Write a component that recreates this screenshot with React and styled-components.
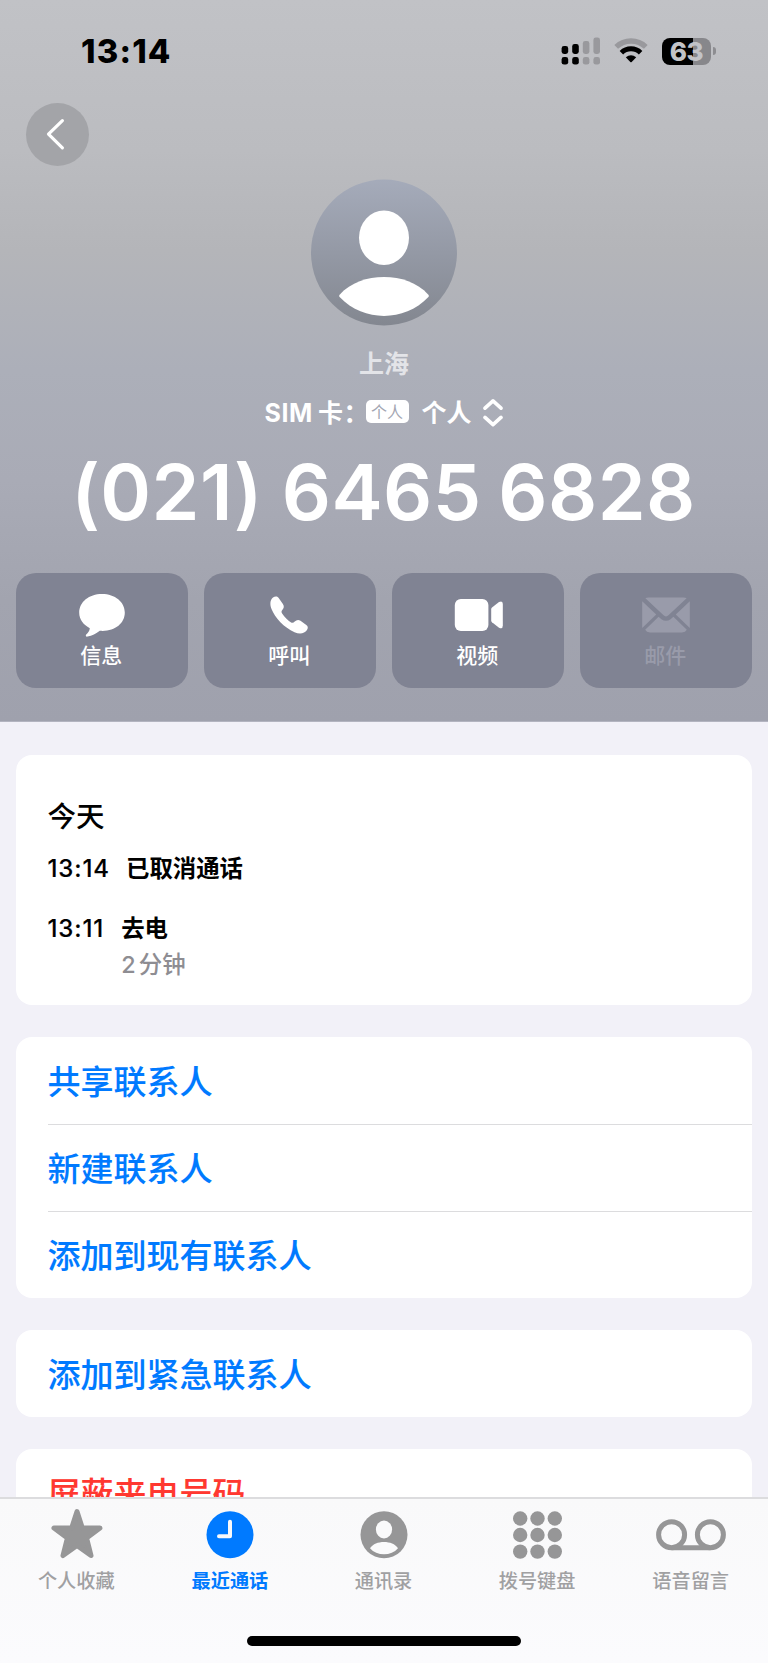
import React from "react";
import styled, { createGlobalStyle } from "styled-components";

const GlobalStyle = createGlobalStyle`
  * { box-sizing: border-box; }
  body {
    margin: 0;
    background: #f2f1f8;
    font-family: Inter, "Noto Sans CJK SC", sans-serif;
  }
`;

const Screen = styled.div`
  width: 768px;
  height: 1663px;
  overflow: hidden;
  display: flex;
  flex-direction: column;
  background: #f2f1f8;
`;

const Header = styled.header`
  flex: none;
  height: 722px;
  display: flex;
  flex-direction: column;
  align-items: center;
  background: linear-gradient(#c1c2c6 0px, #bbbcc0 150px, #b4b5b9 250px, #acafb9 370px, #a9abb6 480px, #a2a4af 600px, #9fa1ad 722px);
  border-bottom: 1px solid #b3b4c0;
`;

const StatusBar = styled.div`
  width: 100%;
  height: 103px;
  padding: 30px 52px 0 81px;
  display: flex;
  justify-content: space-between;
`;

const Clock = styled.time`
  font-size: 32.8px;
  line-height: 42px;
  font-weight: 800;
  letter-spacing: 1.2px;
  color: #000;
`;

const StatusIcons = styled.div`
  height: 42px;
  display: flex;
  align-items: center;
`;

const SignalSvg = styled.svg`
  margin-right: 13px;
`;

const WifiSvg = styled.svg`
  margin-right: 14px;
`;

const Battery = styled.div`
  width: 49px;
  height: 27px;
  border-radius: 8px;
  background: linear-gradient(90deg, #000 0 31px, #87878b 31px);
  color: #c2c3c7;
  font-size: 26px;
  font-weight: 800;
  line-height: 27px;
  letter-spacing: -0.3px;
  text-align: center;
`;

const BatteryCap = styled.div`
  width: 3px;
  height: 8px;
  margin-left: 2px;
  border-radius: 0 3px 3px 0;
  background: #8d8d91;
`;

const NavBar = styled.nav`
  width: 100%;
  height: 76px;
  padding-left: 26px;
`;

const BackButton = styled.button`
  width: 63px;
  height: 63px;
  padding: 0;
  border: 0;
  border-radius: 50%;
  background: #a3a4a8;
  display: block;
`;

const AvatarSvg = styled.svg`
  flex: none;
`;

const Place = styled.div`
  height: 30px;
  margin-top: 23px;
  line-height: 30px;
  font-size: 25px;
  font-weight: 700;
  color: #e3e4e8;
`;

const SimRow = styled.div`
  height: 36px;
  margin-top: 15px;
  padding: 1px 1px 0 0;
  display: flex;
  align-items: center;
  color: #fff;
  font-size: 25px;
  font-weight: 700;
  line-height: 36px;
`;

const SimLabel = styled.span`
  width: 101px;
  white-space: nowrap;
  letter-spacing: 0.6px;
  word-spacing: -1.5px;
`;

const SimTag = styled.span`
  width: 43px;
  height: 23px;
  margin: -3px 13px 0 0;
  border-radius: 5px;
  background: #fff;
  color: #a3a6b2;
  font-size: 16px;
  font-weight: 400;
  line-height: 24px;
  text-align: center;
`;

const SimName = styled.span`
  width: 61px;
`;

const PhoneNumber = styled.h1`
  margin: 12px 0 0;
  height: 100px;
  display: flex;
  font-size: 77px;
  line-height: 100px;
  font-weight: 600;
  letter-spacing: 0.4px;
  white-space: pre;
  color: #fff;
`;

const NumberPart = styled.span`
  margin-left: ${(p) => p.$pull}px;
`;

const Actions = styled.div`
  width: 100%;
  margin-top: auto;
  padding: 0 16px 33px;
  display: grid;
  grid-template-columns: repeat(4, 1fr);
  gap: 16px;
`;

const ActionButton = styled.button`
  height: 115px;
  padding: 17px 0 0;
  border: 0;
  border-radius: 20px;
  background: #808393;
  color: ${(p) => (p.disabled ? "#999baa" : "#fff")};
  display: flex;
  flex-direction: column;
  align-items: center;
  font-family: inherit;
  font-size: 21px;
  font-weight: 500;
  line-height: 28px;
  span { margin-top: 4px; padding-right: 1.5px; }
`;

const Content = styled.main`
  flex: 1;
  min-height: 0;
  overflow: hidden;
  padding: 33px 16px 0;
  display: flex;
  flex-direction: column;
  gap: 32px;
`;

const Card = styled.section`
  flex: none;
  background: #fff;
  border-radius: 16px;
  overflow: hidden;
`;

const HistoryCard = styled(Card)`
  height: 250px;
  padding: 42px 31.5px 0;
  color: #000;
`;

const DayTitle = styled.h2`
  margin: 0;
  height: 40px;
  font-size: 28.5px;
  font-weight: 500;
  line-height: 40px;
`;

const CallRow = styled.div`
  display: flex;
  gap: ${(p) => p.$gap}px;
  margin-top: ${(p) => p.$top}px;
  font-size: 23.4px;
  line-height: 36px;
`;

const CallTime = styled.span`
  font-size: 24px;
  font-weight: 500;
  letter-spacing: 0.9px;
  -webkit-text-stroke: 0.15px;
`;

const CallKind = styled.div`
  font-weight: 700;
`;

const Duration = styled.div`
  font-weight: 500;
  word-spacing: -3px;
  color: #8e8d92;
`;

const LinkRow = styled.a`
  display: block;
  height: 87px;
  padding-top: 2px;
  margin-left: 31.5px;
  font-size: 33px;
  line-height: 87px;
  font-weight: 500;
  -webkit-text-stroke: 0.1px;
  color: ${(p) => (p.$danger ? "#ff3830" : "#007aff")};
  & + & {
    border-top: 1px solid #dcdcde;
    padding-top: 1px;
  }
`;

const TabBar = styled.footer`
  flex: none;
  height: 166px;
  border-top: 2px solid #dcdcde;
  background: linear-gradient(#f9f9fa, #fbfbfd);
  display: flex;
  flex-direction: column;
  align-items: center;
`;

const Tabs = styled.div`
  width: 100%;
  height: 137px;
  padding-top: 11px;
  display: grid;
  grid-template-columns: repeat(5, 1fr);
`;

const Tab = styled.div`
  display: flex;
  flex-direction: column;
  align-items: center;
  color: ${(p) => (p.$active ? "#007aff" : "#969697")};
  font-size: 19.2px;
  font-weight: ${(p) => (p.$active ? 700 : 500)};
  line-height: 28px;
  svg { overflow: visible; }
  span {
    margin-top: 3px;
    padding-right: 1px;
    color: ${(p) => (p.$active ? "#007aff" : "#a0a0a2")};
  }
`;

const HomeIndicator = styled.div`
  width: 274px;
  height: 10px;
  border-radius: 5px;
  background: #000;
`;

function Signal() {
  const tops = [9, 7, 4, 0.5];
  return (
    <SignalSvg width="40" height="28" viewBox="0 0 40 28">
      {tops.map((t, i) => (
        <g key={t} fill={i < 2 ? "#000" : "#99999d"}>
          <rect x={0.6 + i * 10.6} y={t} width="6.6" height={17 - t} rx="2.4" />
          <rect x={0.6 + i * 10.6} y="20" width="6.6" height="7.6" rx="2.4" />
        </g>
      ))}
    </SignalSvg>
  );
}

function Wifi() {
  return (
    <WifiSvg width="34" height="28" viewBox="0 0 34 28" fill="none">
      <path d="M2.2 9.9A21.6 21.6 0 0 1 31.8 9.9" stroke="#99999d" strokeWidth="5.4" />
      <path d="M7.4 15.7A13.8 13.8 0 0 1 26.6 15.7" stroke="#000" strokeWidth="5" />
      <path d="M11.8 20.3Q17 16 22.2 20.3L17.7 25Q17 25.6 16.3 25Z" fill="#000" />
    </WifiSvg>
  );
}

function Avatar() {
  return (
    <AvatarSvg width="146" height="147" viewBox="0 -0.5 146 147">
      <defs>
        <linearGradient id="avatar" x1="0" y1="0" x2="0" y2="1">
          <stop offset="0" stopColor="#a5abba" />
          <stop offset="1" stopColor="#838790" />
        </linearGradient>
      </defs>
      <circle cx="73" cy="73" r="73" fill="url(#avatar)" />
      <ellipse cx="73" cy="58.3" rx="25" ry="27.3" fill="#fff" />
      <path d="M28.6 115.2C40 103 56 97.6 73 97.6S106 103 117.4 115.2Q118.5 116.4 117.4 117.6C105 130.5 89 136.5 73 136.5S41 130.5 28.6 117.6Q27.5 116.4 28.6 115.2Z" fill="#fff" />
    </AvatarSvg>
  );
}

const icons = {
  message: (
    <svg width="52" height="48" viewBox="0 0 52 48" fill="currentColor">
      <path d="M26 4C13 4 3.2 12 3.2 22.8C3.2 29.5 7.6 35 13.8 38.2C13.6 41 12 42.6 10.2 44.5C9.3 45.8 10 47 11.6 46.6C16 45.8 20 43.6 23.8 40.8C38 42 48.8 34 48.8 22.6C48.8 12 39 4 26 4Z" />
    </svg>
  ),
  phone: (
    <svg width="52" height="48" viewBox="1.5 0 52 48" fill="currentColor">
      <path d="M10.5 7.6C12.2 6.3 14.6 5.9 16 7.8L20.4 14C22 16.5 21.4 18.3 19.6 20.3C18.7 21.3 19 22.5 19.6 23.5C21.8 27 25.4 30.6 28.6 32.4C30 33.2 31.2 32.6 32.2 31.5C34 29.8 36 29.5 38 30.8L43.8 35C45.6 36.3 45.7 38 44.5 40C42 43.8 37 44.4 32 42.2C21.5 37.6 12.5 27.8 9 19C7.3 14.6 7.4 10.2 10.5 7.6Z" />
    </svg>
  ),
  video: (
    <svg width="52" height="48" viewBox="0 0 52 48" fill="currentColor">
      <rect x="2.8" y="9" width="33.6" height="32" rx="6" />
      <path d="M39.2 19.4Q39.2 18.3 40 17.6L47 12Q50.8 10.2 50.8 14V35.6Q50.8 39.6 47 37.8L40 32.2Q39.2 31.5 39.2 30.4Z" />
    </svg>
  ),
  mail: (
    <svg width="52" height="48" viewBox="0 0 52 48" fill="currentColor">
      <path d="M5.4 8.2Q6.5 7.6 8.5 7.6H43.5Q45.5 7.6 46.6 8.2L28.7 25.1Q26 27.7 23.3 25.1Z" />
      <path d="M2.2 11.2L16.2 24.6L2.2 38Z" />
      <path d="M49.8 11.2L35.8 24.6L49.8 38Z" />
      <path d="M18.6 26.8L21.4 29.2Q26 32.2 30.6 29.2L33.4 26.8L46.8 39.8Q45.5 42.4 42 42.4H10Q6.5 42.4 5.2 39.8Z" />
    </svg>
  ),
};

const tabIcons = {
  star: (
    <svg width="52" height="54" viewBox="0 0 52 54" fill="currentColor" stroke="currentColor" strokeWidth="5" strokeLinejoin="round">
      <path d="M26 1.6L31.3 17.9L49 18.1L35.6 28L40 45.6L26 35.4L12 45.6L16.4 28L3 18.1L20.7 17.9Z" />
    </svg>
  ),
  clock: (
    <svg width="52" height="54" viewBox="0 0 52 54" fill="none">
      <circle cx="26" cy="24.8" r="23.5" fill="currentColor" />
      <path d="M26 11.8V26.3H15" stroke="#f9f9fa" strokeWidth="4" strokeLinecap="round" strokeLinejoin="round" />
    </svg>
  ),
  person: (
    <svg width="52" height="54" viewBox="0 0 52 54" fill="currentColor">
      <circle cx="26" cy="24.8" r="23.5" />
      <ellipse cx="26" cy="19.5" rx="8.1" ry="8.9" fill="#fafafb" />
      <path d="M12 38.2C15 34.1 20 32.1 26 32.1S37 34.1 40 38.2C36.5 42.3 31.5 44.3 26 44.3S15.5 42.3 12 38.2Z" fill="#fafafb" />
    </svg>
  ),
  keypad: (
    <svg width="52" height="54" viewBox="0.5 0 52 54" fill="currentColor">
      {[8.5, 25, 41.6].map((y) =>
        [8.7, 26, 43.3].map((x) => <circle key={x + "-" + y} cx={x} cy={y} r="7.2" />)
      )}
    </svg>
  ),
  voicemail: (
    <svg width="72" height="54" viewBox="0 0 72 54" fill="none" stroke="currentColor" strokeWidth="5">
      <circle cx="16.6" cy="24.7" r="13" />
      <circle cx="55.4" cy="24.7" r="13" />
      <path d="M16.6 37.7H55.4" />
    </svg>
  ),
};

const actions = [
  { icon: "message", label: "信息" },
  { icon: "phone", label: "呼叫" },
  { icon: "video", label: "视频" },
  { icon: "mail", label: "邮件", disabled: true },
];

const tabs = [
  { icon: "star", label: "个人收藏" },
  { icon: "clock", label: "最近通话", active: true },
  { icon: "person", label: "通讯录" },
  { icon: "keypad", label: "拨号键盘" },
  { icon: "voicemail", label: "语音留言" },
];

export default function App() {
  return (
    <Screen lang="zh-CN">
      <GlobalStyle />
      <Header>
        <StatusBar>
          <Clock>13:14</Clock>
          <StatusIcons>
            <Signal />
            <Wifi />
            <Battery>63</Battery>
            <BatteryCap />
          </StatusIcons>
        </StatusBar>
        <NavBar>
          <BackButton aria-label="返回">
            <svg width="63" height="63" viewBox="0 0 63 63" fill="none" stroke="#fff" strokeWidth="3.2" strokeLinecap="round" strokeLinejoin="round">
              <path d="M36.4 17.6L22.5 31.2L36.4 44.8" />
            </svg>
          </BackButton>
        </NavBar>
        <Avatar />
        <Place>上海</Place>
        <SimRow>
          <SimLabel>SIM 卡：</SimLabel>
          <SimTag>个人</SimTag>
          <SimName>个人</SimName>
          <svg width="20" height="28" viewBox="0 0 20 28" fill="none" stroke="#fff" strokeWidth="3.6" strokeLinecap="round" strokeLinejoin="round">
            <path d="M2 9.2L10 1.9L18 9.2M2 18.4L10 25.7L18 18.4" />
          </svg>
        </SimRow>
        <PhoneNumber>
          <NumberPart $pull={-1}>(021) </NumberPart>
          <NumberPart $pull={-1}>6465 </NumberPart>
          <NumberPart $pull={-3}>6828</NumberPart>
        </PhoneNumber>
        <Actions>
          {actions.map((a) => (
            <ActionButton key={a.icon} disabled={a.disabled}>
              {icons[a.icon]}
              <span>{a.label}</span>
            </ActionButton>
          ))}
        </Actions>
      </Header>
      <Content>
        <HistoryCard>
          <DayTitle>今天</DayTitle>
          <CallRow $top={14} $gap={16}>
            <CallTime>13:14</CallTime>
            <CallKind>已取消通话</CallKind>
          </CallRow>
          <CallRow $top={24} $gap={17}>
            <CallTime>13:11</CallTime>
            <div>
              <CallKind>去电</CallKind>
              <Duration>2 分钟</Duration>
            </div>
          </CallRow>
        </HistoryCard>
        <Card>
          <LinkRow>共享联系人</LinkRow>
          <LinkRow>新建联系人</LinkRow>
          <LinkRow>添加到现有联系人</LinkRow>
        </Card>
        <Card>
          <LinkRow>添加到紧急联系人</LinkRow>
        </Card>
        <Card>
          <LinkRow $danger>屏蔽来电号码</LinkRow>
        </Card>
      </Content>
      <TabBar>
        <Tabs>
          {tabs.map((t) => (
            <Tab key={t.icon} $active={t.active}>
              {tabIcons[t.icon]}
              <span>{t.label}</span>
            </Tab>
          ))}
        </Tabs>
        <HomeIndicator />
      </TabBar>
    </Screen>
  );
}
